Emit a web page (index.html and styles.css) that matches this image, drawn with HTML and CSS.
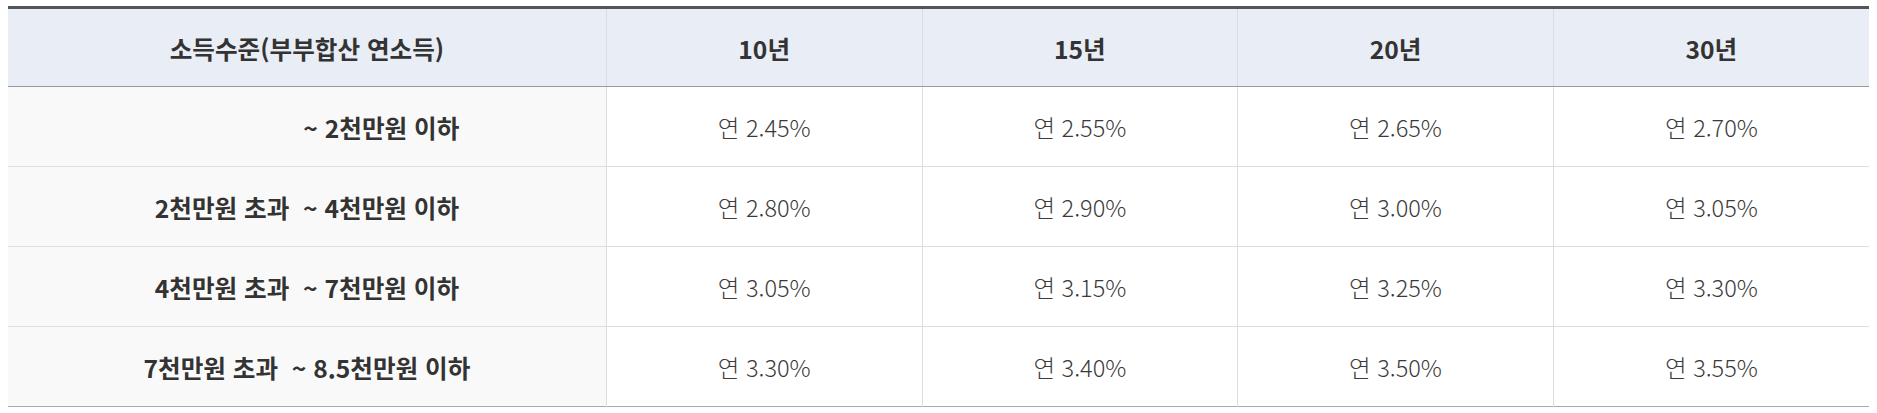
FILE: index.html
```html
<!DOCTYPE html>
<html lang="ko">
<head>
<meta charset="utf-8">
<link rel="stylesheet" href="styles.css">
</head>
<body>
<table class="rate-table">
  <colgroup>
    <col class="col-income">
    <col class="col-term">
    <col class="col-term">
    <col class="col-term">
    <col class="col-term">
  </colgroup>
  <thead>
    <tr>
      <th>소득수준(부부합산 연소득)</th>
      <th>10년</th>
      <th>15년</th>
      <th>20년</th>
      <th>30년</th>
    </tr>
  </thead>
  <tbody>
    <tr>
      <th class="income income-first">~ 2천만원 이하</th>
      <td>연 2.45%</td>
      <td>연 2.55%</td>
      <td>연 2.65%</td>
      <td>연 2.70%</td>
    </tr>
    <tr>
      <th class="income">2천만원 초과&nbsp;&nbsp;~ 4천만원 이하</th>
      <td>연 2.80%</td>
      <td>연 2.90%</td>
      <td>연 3.00%</td>
      <td>연 3.05%</td>
    </tr>
    <tr>
      <th class="income">4천만원 초과&nbsp;&nbsp;~ 7천만원 이하</th>
      <td>연 3.05%</td>
      <td>연 3.15%</td>
      <td>연 3.25%</td>
      <td>연 3.30%</td>
    </tr>
    <tr>
      <th class="income">7천만원 초과&nbsp;&nbsp;~ 8.5천만원 이하</th>
      <td>연 3.30%</td>
      <td>연 3.40%</td>
      <td>연 3.50%</td>
      <td>연 3.55%</td>
    </tr>
  </tbody>
</table>
</body>
</html>
```

FILE: styles.css
```css
html, body {
  margin: 0;
  padding: 0;
  background: #ffffff;
}

body {
  padding: 6px 8px 0 8px;
  font-family: "Noto Sans CJK KR", "Noto Sans", sans-serif;
  color: #333333;
}

.rate-table {
  width: 100%;
  border-collapse: collapse;
  table-layout: fixed;
  border-top: 3px solid #555555;
  border-bottom: 1px solid #aaaaaa;
}

.col-income {
  width: 32.15%;
}

.col-term {
  width: 16.96%;
}

.rate-table thead th {
  height: 77px;
  background: #e9edf5;
  font-size: 24.6px;
  font-weight: 700;
  color: #333333;
  text-align: center;
  vertical-align: middle;
  border-left: 1px solid #d9dce3;
  border-bottom: 1px solid #999999;
  padding: 0;
}

.rate-table thead th:first-child {
  border-left: none;
}

.rate-table tbody th,
.rate-table tbody td {
  height: 79px;
  text-align: center;
  vertical-align: middle;
  border-top: 1px solid #dddddd;
  border-left: 1px solid #dddddd;
  padding: 0;
}

.rate-table tbody tr:first-child th,
.rate-table tbody tr:first-child td {
  border-top: none;
}

.rate-table tbody th.income {
  background: #f9f9f9;
  border-left: none;
  font-size: 24.6px;
  font-weight: 700;
  color: #333333;
}

.rate-table tbody th.income-first {
  padding-left: 6.05em;
}

.rate-table tbody td {
  background: #ffffff;
  font-size: 23.5px;
  font-weight: 300;
  color: #3a3a3a;
}
```
